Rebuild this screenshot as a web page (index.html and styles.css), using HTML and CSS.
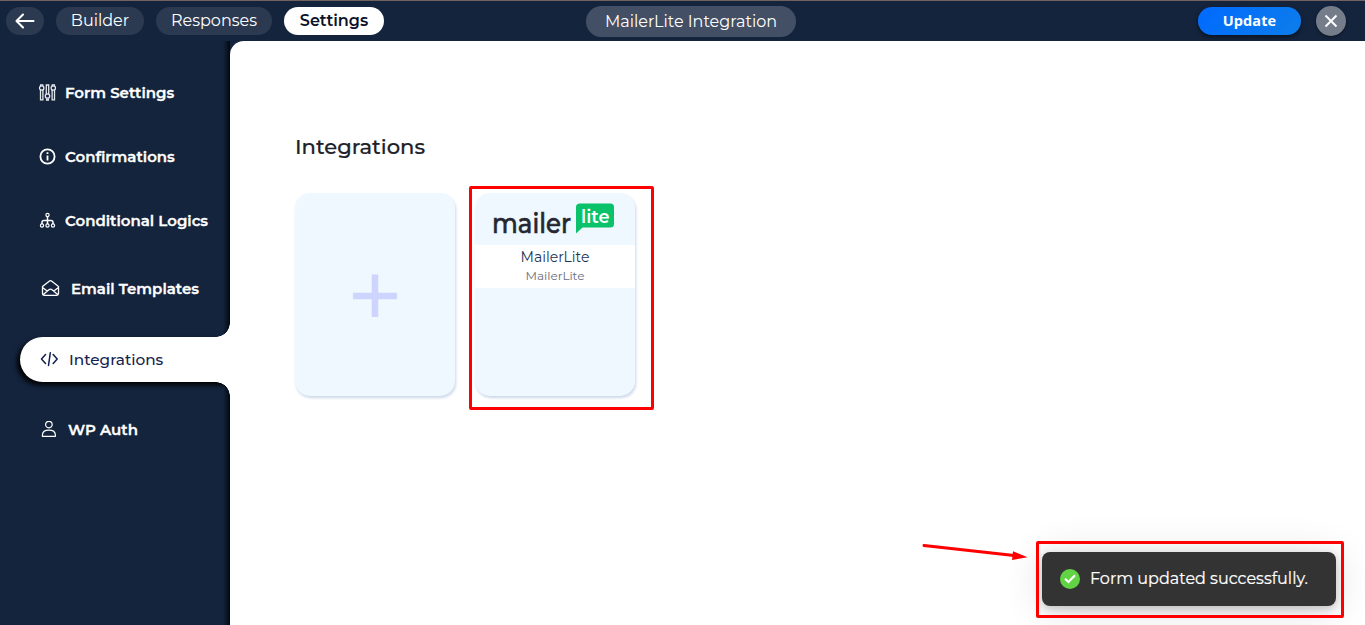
FILE: index.html
```html
<!DOCTYPE html>
<html lang="en">
<head>
<meta charset="utf-8">
<title>MailerLite Integration</title>
<link rel="stylesheet" href="styles.css">
</head>
<body>
<header class="topbar">
  <nav class="tabs">
    <a class="tab tab-back"><svg width="20" height="16" viewBox="0 0 20 16" fill="none" stroke="#fff" stroke-width="2.1" stroke-linecap="round" stroke-linejoin="round"><path d="M18.500 8H2M8 1.500 1.500 8 8 14.500"/></svg></a>
    <a class="tab tab-builder"><span>Builder</span></a>
    <a class="tab tab-responses"><span>Responses</span></a>
    <a class="tab tab-active"><span>Settings</span></a>
  </nav>
  <div class="form-title"><span>MailerLite Integration</span></div>
  <div class="actions">
    <button class="update"><span>Update</span></button>
    <button class="close"><svg width="14" height="14" viewBox="0 0 14 14" stroke="#fff" stroke-width="2"><path d="M1.500 1.500l11 11M12.500 1.500l-11 11"/></svg></button>
  </div>
</header>
<div class="layout">
  <aside class="sidebar">
    <a class="item form"><svg width="17" height="17" viewBox="0 0 17 17" fill="none" stroke="#e4e7ec" stroke-width="1.300"><path d="M1.500 5.500V15.900H3.900V5.500M1.600 2V.8H3.800V2M7.300 10V1H9.700V10M7.600 14.500V16H9.400V14.500M13.100 5.500V15.900H15.500V5.500M13.200 2V.8H15.400V2"/><circle cx="2.700" cy="4" r="2.200"/><circle cx="8.500" cy="12" r="2.200"/><circle cx="14.300" cy="4" r="2.200"/></svg><span>Form Settings</span></a>
    <a class="item confirm"><svg width="17" height="17" viewBox="0 0 17 17" fill="none" stroke="#fff" stroke-width="1.800"><circle cx="8.500" cy="8.500" r="7.100"/><path d="M8.500 7.400V12.500M8.500 4.300V6.100"/></svg><span>Confirmations</span></a>
    <a class="item logic"><svg width="17" height="17" viewBox="0 0 17 17" fill="none" stroke="#fff" stroke-width="1.200"><circle cx="8.500" cy="3" r="1.600"/><path d="M8.500 4.600V12M3 12V10.300Q3 8.500 4.800 8.500H12.200Q14 8.500 14 10.300V12" stroke-width="1.500"/><circle cx="3" cy="13.500" r="1.600"/><circle cx="8.500" cy="13.500" r="1.600"/><circle cx="14" cy="13.500" r="1.600"/></svg><span>Conditional Logics</span></a>
    <a class="item email"><svg width="19" height="18" viewBox="0 0 19 18" fill="none" stroke="#fff" stroke-width="1.300" stroke-linejoin="round"><path d="M1.500 6.500 8.200 1.200Q9.500.2 10.800 1.200L17.500 6.500V13.500Q17.500 15.300 15.700 15.300H3.300Q1.500 15.300 1.500 13.500ZM1.500 7.500 6.200 11M17.500 7.500 12.800 11M2 14.700 7.900 9.700Q9.500 8.500 11.100 9.700L17 14.700"/></svg><span>Email Templates</span></a>
    <a class="item active"><svg width="18" height="16" viewBox="0 0 18 16" fill="none" stroke="#10214f" stroke-width="1.500" stroke-linecap="round" stroke-linejoin="round"><path d="M5.500 2.500 1.500 7 5.500 11.500M13.200 2.500 17.200 7 13.200 11.500M10.300 .8 8.500 13.500"/></svg><span>Integrations</span></a>
    <a class="item auth"><svg width="15" height="17" viewBox="0 0 15 17" fill="none" stroke="#fff" stroke-width="1.200"><circle cx="7.900" cy="3.600" r="3.300"/><path d="M1.400 15.300V14Q1.600 9.200 7.900 9.200T14.400 14V15.300Z" stroke-linejoin="round"/></svg><span>WP Auth</span></a>
  </aside>
  <main class="content">
    <h1><span>Integrations</span></h1>
    <div class="cards">
      <section class="card add"><svg width="44" height="44" viewBox="0 0 44 44" stroke="#cdd5ff" stroke-width="6.500"><path d="M22 .5V43M0 22H44"/></svg></section>
      <section class="card mailer">
        <svg class="logo" width="160" height="52" viewBox="0 0 160 52"><text class="logo-dark" x="17" y="40.300" textLength="79" lengthAdjust="spacingAndGlyphs">mailer</text><path d="M105 10.500H135.500Q139 10.500 139 14V31Q139 34.500 135.500 34.500H107.500L101 40.500V14Q101 10.500 105 10.500Z" fill="#09c269"/><text class="logo-light" x="106" y="30" textLength="28.500" lengthAdjust="spacingAndGlyphs">lite</text></svg>
        <div class="card-text"><div class="name"><span>MailerLite</span></div><div class="kind"><span>MailerLite</span></div></div>
        <i class="highlight"></i>
      </section>
    </div>
  </main>
</div>
<svg class="arrow" width="108" height="20" viewBox="0 0 108 20"><path d="M2 3.500 92 13.500" stroke="red" stroke-width="3" stroke-linecap="round"/><path d="M91 9.200 105.500 15.300 90 18Z" fill="red"/></svg>
<div class="toast"><svg width="20" height="20" viewBox="0 0 20 20"><circle cx="10" cy="10" r="10" fill="#61d345"/><path d="M5 9.700 8.500 13 15 6.200" fill="none" stroke="#fff" stroke-width="2.200"/></svg><span>Form updated successfully.</span><i class="highlight"></i></div>
</body>
</html>
```
FILE: styles.css
```css
* { box-sizing: border-box; }
body {
  margin: 0;
  width: 1365px;
  height: 625px;
  overflow: hidden;
  position: relative;
  background: #14243d;
  font-family: Montserrat, Inter, sans-serif;
}
svg { display: block; flex: none; }
span { white-space: nowrap; }
.topbar {
  height: 41px;
  border-top: 1px solid #71615f;
  display: grid;
  grid-template-columns: 586px 210px 1fr;
  align-items: center;
  color: #fff;
}
.tabs { display: flex; gap: 12px; padding-left: 6px; }
.tab {
  height: 28px;
  border-radius: 14px;
  background: #2c3a51;
  display: flex;
  align-items: center;
  justify-content: center;
  font-size: 16px;
  padding-bottom: 1px;
}
.tab-back { width: 38px; padding-bottom: 0; }
.tab-builder { width: 88px; }
.tab-responses { width: 116px; }
.tab-active { width: 100px; background: #fff; color: #0b1229; font-weight: 600; }
.form-title {
  height: 31px;
  border-radius: 16px;
  background: #434f64;
  display: flex;
  align-items: center;
  justify-content: center;
  font-size: 16px;
}
.actions { display: flex; justify-content: flex-end; align-items: center; gap: 15px; padding-right: 19px; }
button { border: 0; padding: 0; color: #fff; display: flex; align-items: center; justify-content: center; }
.update {
  width: 103px;
  height: 28px;
  border-radius: 14px;
  background: linear-gradient(135deg, #006aff, #0d7de9);
  box-shadow: 0 2px 4px rgba(0, 0, 0, .5);
  font: 700 14.500px "Open Sans", sans-serif;
  letter-spacing: .1px;
  padding-bottom: 1px;
}
.close { width: 30px; height: 30px; border-radius: 50%; background: #757c8a; box-shadow: 0 1px 3px rgba(0, 0, 0, .5); }
.layout { display: grid; grid-template-columns: 230px 1fr; height: 584px; }
.sidebar {
  background: linear-gradient(90deg, transparent 223px, #020811 230px);
  padding-top: 29px;
  display: flex;
  flex-direction: column;
}
.item {
  height: 45px;
  display: flex;
  align-items: center;
  color: #fff;
  font-size: 15px;
  font-weight: 600;
  -webkit-text-stroke: .3px currentColor;
}
.form { padding-left: 39px; gap: 9px; margin-bottom: 19px; }
.confirm { padding-left: 39px; gap: 9px; margin-bottom: 19px; }
.logic { padding-left: 39px; gap: 9px; margin-bottom: 23px; }
.email { padding-left: 41px; gap: 11px; margin-bottom: 26px; }
.active {
  position: relative;
  margin: 0 0 25px 20px;
  padding-left: 20px;
  gap: 11px;
  background: #fff;
  color: #14234f;
  font-size: 15.300px;
  font-weight: 500;
  -webkit-text-stroke: 0;
  border-radius: 23px 0 0 23px;
  box-shadow: -3px 3px 5px #000;
}
.active::before, .active::after {
  content: "";
  position: absolute;
  right: 0;
  width: 14px;
  height: 14px;
}
.active::before { top: -14px; background: radial-gradient(circle at 0 0, transparent 13.500px, #fff 14px); }
.active::after { bottom: -14px; background: radial-gradient(circle at 0 100%, transparent 13.500px, #fff 14px); }
.auth { padding-left: 41px; gap: 12px; }
.content { position: relative; background: #fff; border-top-left-radius: 14px; padding: 92px 0 0 65px; }
h1 { margin: 0 0 32px; height: 28px; line-height: 28px; font-size: 21.100px; font-weight: 500; color: #1d2129; -webkit-text-stroke: .2px currentColor; }
.cards { display: flex; gap: 20px; }
.card {
  position: relative;
  width: 160px;
  height: 203px;
  border-radius: 15px;
  background: #eff7ff;
  box-shadow: 1px 2px 3px #cbd8e9;
}
.add { display: flex; align-items: center; justify-content: center; padding-top: 2px; }
.logo { height: 52px; }
.logo-dark { font-size: 27px; font-weight: 500; fill: #242731; stroke: #242731; stroke-width: .6px; }
.logo-light { font-size: 19px; font-weight: 600; fill: #fff; }
.card-text { height: 43px; background: #fff; text-align: center; padding-top: 2px; }
.name { font-size: 14px; line-height: 21px; color: #1c3554; }
.kind { font-size: 12px; line-height: 16px; color: #6a6d7c; }
.highlight { position: absolute; border: 3px solid red; border-radius: 2px; }
.mailer .highlight { left: -6px; top: -7px; width: 185px; height: 224px; }
.arrow { position: absolute; left: 922px; top: 542px; }
.toast {
  position: absolute;
  left: 1042px;
  top: 552px;
  width: 294px;
  height: 54px;
  border-radius: 8px;
  background: #333;
  color: #fff;
  display: flex;
  align-items: center;
  gap: 10px;
  padding-left: 18px;
  font-size: 16px;
  box-shadow: 0 3px 10px rgba(0, 0, 0, .2), 0 3px 40px rgba(0, 0, 0, .14);
}
.toast span { padding-bottom: 1px; -webkit-text-stroke: .2px currentColor; }
.toast .highlight { left: -6px; top: -11px; width: 308px; height: 77px; }
```
